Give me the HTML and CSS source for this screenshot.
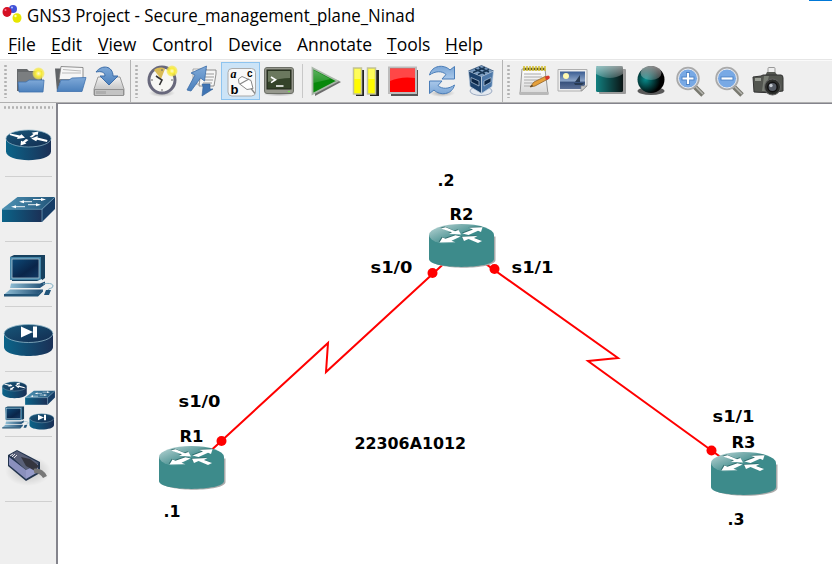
FILE: index.html
```html
<!DOCTYPE html>
<html lang="en">
<head>
<meta charset="utf-8">
<title>GNS3 Project</title>
<link rel="stylesheet" href="styles.css">
</head>
<body>
<svg class="defs" aria-hidden="true">
  <defs>
    <linearGradient id="blue" x1="0" y1="0" x2="0" y2="1"><stop offset="0" stop-color="#7fa9d8"/><stop offset="1" stop-color="#4b80bc"/></linearGradient>
    <linearGradient id="pale" x1="0" y1="0" x2="0" y2="1"><stop offset="0" stop-color="#7ba6d6"/><stop offset="1" stop-color="#a9c8ea"/></linearGradient>
    <linearGradient id="navy" x1="0" y1="0" x2="1" y2="0"><stop offset="0" stop-color="#0b6489"/><stop offset="1" stop-color="#1b3056"/></linearGradient>
    <linearGradient id="face" x1="0" y1="0" x2="1" y2="1"><stop offset="0" stop-color="#17577a"/><stop offset="1" stop-color="#132c50"/></linearGradient>
    <linearGradient id="screen" x1="0" y1="0" x2="1" y2="1"><stop offset="0" stop-color="#0d4a78"/><stop offset=".6" stop-color="#0a2549"/><stop offset="1" stop-color="#123a64"/></linearGradient>
    <linearGradient id="steel" x1="0" y1="0" x2="1" y2="0"><stop offset="0" stop-color="#4e93b5"/><stop offset="1" stop-color="#215378"/></linearGradient>
    <linearGradient id="light" x1="0" y1="0" x2="1" y2="0"><stop offset="0" stop-color="#8fbdd4"/><stop offset="1" stop-color="#1c4a70"/></linearGradient>
    <linearGradient id="teal" x1="0" y1="0" x2="1" y2="0"><stop offset="0" stop-color="#128080"/><stop offset="1" stop-color="#0a1414"/></linearGradient>
    <linearGradient id="gloss" x1="0" y1="0" x2="0" y2="1"><stop offset="0" stop-color="#fff" stop-opacity=".55"/><stop offset="1" stop-color="#fff" stop-opacity=".2"/></linearGradient>
    <linearGradient id="paper" x1="0" y1="0" x2="0" y2="1"><stop offset="0" stop-color="#fff"/><stop offset="1" stop-color="#d8d8d8"/></linearGradient>
    <linearGradient id="metal" x1="0" y1="0" x2="0" y2="1"><stop offset="0" stop-color="#f1f1f1"/><stop offset="1" stop-color="#b4b4b4"/></linearGradient>
    <linearGradient id="sky" x1="0" y1="0" x2="0" y2="1"><stop offset="0" stop-color="#3a5c92"/><stop offset=".55" stop-color="#8ea6c8"/><stop offset=".6" stop-color="#38517c"/><stop offset="1" stop-color="#5d7196"/></linearGradient>
    <radialGradient id="sun"><stop offset="0" stop-color="#fffbd0"/><stop offset=".45" stop-color="#f9ec38"/><stop offset=".8" stop-color="#f5e84d" stop-opacity=".75"/><stop offset="1" stop-color="#f5e84d" stop-opacity="0"/></radialGradient>
    <radialGradient id="orb" cx=".3" cy=".5" r=".7"><stop offset="0" stop-color="#078a8a"/><stop offset=".45" stop-color="#033c3c"/><stop offset=".8" stop-color="#000"/></radialGradient>
    <radialGradient id="soft"><stop offset="0" stop-color="#000" stop-opacity=".3"/><stop offset="1" stop-color="#000" stop-opacity="0"/></radialGradient>
    <linearGradient id="shine" x1="0" y1=".1" x2=".6" y2=".6"><stop offset="0" stop-color="#b8d5d5"/><stop offset=".45" stop-color="#7db0b0"/><stop offset=".95" stop-color="#3d8b8b"/></linearGradient>
    <symbol id="router" viewBox="0 0 56 64" overflow="visible">
      <path d="M6 26.500v13c0 11.500 45 11.500 45 0v-13z" fill="url(#navy)"/>
      <ellipse cx="28.500" cy="26.500" rx="22.500" ry="8.500" fill="url(#face)" stroke="#8fb6c8" stroke-width=".7"/>
      <path d="M10 21.500l10 2 1.500-1.200 3.500 3.500-8 1.200.8-1.600-8-2.400zM29.500 25l4-3-2-1.200 7-1.300-1 3.800-1.500-.7-4 3zM47 30l-10-2.300-.8 1.500-5-2.700 6.500-2.500-.2 1.500 10 2.500zM28.500 28l-3.500 2.800 1.500.8-6 2 .5-4.800 1.800.8 3.200-2.600z" fill="#fff"/>
    </symbol>
    <symbol id="switch" viewBox="0 0 56 64" overflow="visible">
      <path d="M2 32L17.500 20H55L42 32z" fill="url(#steel)"/>
      <path d="M2 32h40v13H2z" fill="url(#navy)"/>
      <path d="M42 32l13-12v12L42 45z" fill="#173d66"/>
      <path d="M2 32.300h40L55 20M42 32v13" fill="none" stroke="#75a9c4" stroke-width=".7"/>
      <path d="M33 22.500h9M23 24.700h9M28 27.700h9M15 29.700h10" stroke="#fff" stroke-width=".9"/>
      <path d="M41 21l5 1.500-5 1.500zM24 23.200l-5 1.500 5 1.500zM36 26.200l5 1.500-5 1.500zM16 28.200l-5 1.500 5 1.500z" fill="#fff"/>
    </symbol>
    <symbol id="pc" viewBox="0 0 56 64" overflow="visible">
      <path d="M10 15l4-2h31v23l-4 3H12z" fill="#17415f"/>
      <path d="M10 15h31v23H10z" fill="#4383a6"/>
      <rect x="12" y="17" width="27" height="19" fill="url(#screen)" stroke="#bad0db" stroke-width=".7"/>
      <path d="M13 39h24l5-2v3H13z" fill="#eaf2f5"/>
      <path d="M11 41.500h29l5-2v3l-5 3.500H10z" fill="url(#light)"/>
      <path d="M10 47.500h33l-5 5H4z" fill="url(#light)"/><path d="M4 52h34l5-4.500v2l-5 5H4z" fill="#225477"/>
      <path d="M43 42c4-1 10-1 10 2s-5 2-5 4" fill="none" stroke="#82afc4"/><path d="M46 48h5l-2 5h-5z" fill="#22557a"/>
    </symbol>
    <symbol id="ring" viewBox="0 0 56 64" overflow="visible">
      <path d="M4 26v14c0 12 49 12 49 0V26z" fill="url(#navy)"/>
      <ellipse cx="28.500" cy="26.500" rx="24.300" ry="9" fill="url(#face)" stroke="#8fb6c8" stroke-width=".8"/>
      <path d="M21 19.500l12 5.500-12 5.500zM33 19.500h4v11h-4z" fill="#fff"/>
    </symbol>
    <symbol id="node" viewBox="0 0 68 46" overflow="visible">
      <path d="M2 12.500v23.500c3 10.500 64.500 10 64.500 0V12.500z" fill="#aaa"/>
      <path d="M0 11v24c0 10.500 65 10.500 65 0V11z" fill="#3d8b8b"/>
      <ellipse cx="32.500" cy="11" rx="32.500" ry="11" fill="url(#shine)"/>
      <path id="arrows-shade" d="M12 4.500l4.500-1.200 9.500 4 3.500-1.300 2.500 4.500-12-.7 3-1.500zM53.500 3.300l-1.500 4.700-3-1.200-9.500 4.200-6-1.500 10.500-4-4-1.700zM33 12.700l15.500-.7-3.500 2 8 3-4 2-9.500-4-4.500 2zM26.500 11.200l5 1.300-9 4.300 4 1.500-16 .2 3-5 3 1.200z" fill="#245f5f" opacity=".75" transform="translate(-.8 -.8)"/>
      <path d="M12 4.500l4.500-1.200 9.500 4 3.500-1.300 2.500 4.500-12-.7 3-1.500zM53.500 3.300l-1.500 4.700-3-1.200-9.500 4.200-6-1.500 10.500-4-4-1.700zM33 12.700l15.500-.7-3.500 2 8 3-4 2-9.500-4-4.500 2zM26.500 11.200l5 1.300-9 4.300 4 1.500-16 .2 3-5 3 1.200z" fill="#fff"/>
    </symbol>
  </defs>
</svg>

<div class="window">
  <header class="titlebar">
    <svg class="logo" viewBox="0 0 24 24"><circle cx="13" cy="9" r="4" fill="#4052d8"/><ellipse cx="7" cy="12" rx="4.500" ry="5" fill="#d51124"/><ellipse cx="17" cy="18" rx="4.500" ry="4.800" fill="#e7e600"/><circle cx="5.500" cy="10" r="1" fill="#f79"/><circle cx="12" cy="7.500" r="1" fill="#b9c2ff"/><circle cx="15.500" cy="16" r="1.200" fill="#ffffb0"/></svg>
    <svg class="title" viewBox="0 0 560 30"><text x="0" y="22" textLength="388" lengthAdjust="spacingAndGlyphs">GNS3 Project - Secure_management_plane_Ninad</text></svg>
    <span class="accent"></span>
  </header>

  <nav class="menu">
    <span class="item file"><u>F</u>ile</span><span class="item edit"><u>E</u>dit</span><span class="item view"><u>V</u>iew</span><span class="item control">Control</span><span class="item device">Device</span><span class="item annotate">Annotate</span><span class="item tools"><u>T</u>ools</span><span class="item help"><u>H</u>elp</span>
  </nav>

  <div class="toolbars">
    <div class="bar files">
      <i class="grip"></i>
      <svg class="ico" viewBox="0 0 39 38"><path d="M5 7h10l2 2h13v20H5z" fill="#66696b"/><path d="M6 10h23v10H6z" fill="#7b7e80"/><path d="M6 20h8l3-2h15l-1 12H7z" fill="url(#blue)" stroke="#3f71ad" stroke-width=".8"/><circle cx="26.500" cy="11.500" r="6.500" fill="url(#sun)"/></svg>
      <svg class="ico" viewBox="0 0 39 38"><path d="M4 6.500h8l2 3h17v8H10L6 30z" fill="#606366"/><path d="M10 4.500l22 1v12H8z" fill="#f6f6f6" stroke="#777" stroke-width=".8"/><path d="M12 7.500l18 1.500M11 11h19" stroke="#bbb"/><path d="M10 18h8l3-2 14-.5-4 14H6z" fill="url(#blue)" stroke="#3f71ad" stroke-width=".8"/></svg>
      <svg class="ico" viewBox="0 0 39 38"><path d="M8 15h22l4 12v6H4v-6z" fill="url(#metal)" stroke="#888" stroke-width=".8"/><path d="M4.500 27.500h29v6h-29z" fill="#c3c3c3" stroke="#858585" stroke-width=".8"/><path d="M7 29v3M9 29v3M11 29v3M13 29v3M15 29v3" stroke="#888" stroke-width=".7"/><path d="M6 10C12 2 23 4 23 14h5l-9 9-9-9h5c0-4-4-5-9-4z" fill="url(#blue)" stroke="#3c6da8"/></svg>
    </div>
    <div class="bar control">
      <i class="grip"></i>
      <svg class="ico" viewBox="0 0 39 38"><ellipse cx="19" cy="31" rx="13" ry="4" fill="url(#soft)"/><circle cx="19" cy="18" r="13" fill="#f7f7f4" stroke="#68687c" stroke-width="3"/><path d="M18 17L11 8c4-3 8-3 11-1z" fill="#d9bb55"/><path d="M13 14l6 4-2.500 5" fill="none" stroke="#333" stroke-width="1.600"/><path d="M19 7v2M8 18h2M28 18h2M19 27v2" stroke="#666"/><circle cx="29" cy="9" r="6" fill="url(#sun)"/></svg>
      <svg class="ico" viewBox="0 0 39 38"><path d="M11 7h13l3 4v11H11z" fill="#f3f3f3" stroke="#999" stroke-width=".8"/><path d="M19 8h15v4l-2 12H17z" fill="#f6f6f6" stroke="#777" stroke-width=".8"/><path d="M24 12h8M23 15h9M22 18h9M21 21h9" stroke="#999"/><path d="M20 22h8v5h3l-11 7 1-9z" fill="#3f74b4" stroke="#2f5f98" stroke-width=".6"/><path d="M24.500 4l-2 15-4-3L9 29l-4-1 8-15-4-2z" fill="url(#blue)" stroke="#3b6ca7" stroke-width=".8"/></svg>
      <svg class="ico active" viewBox="0 0 39 38"><rect x="7" y="6.500" width="27.500" height="27.500" rx="4" fill="#f8f8f8" stroke="#aaa"/><text x="9.500" y="15.500" class="glyph serif">a</text><text x="26" y="15" class="glyph">c</text><text x="9.500" y="31.500" class="glyph large">b</text><path d="M17.500 17l3.500-2.500 9 4 2 8-6 1-8-6z" fill="#fff" stroke="#888"/><path d="M19 22l9-5M30 26.500l4 5" stroke="#888" stroke-width="1.300"/></svg>
      <svg class="ico" viewBox="0 0 39 38"><ellipse cx="19" cy="32" rx="16" ry="2.500" fill="url(#soft)"/><rect x="4.500" y="5.500" width="29" height="26" rx="2.500" fill="#96988d" stroke="#6c6f67"/><rect x="7" y="8" width="24" height="19" fill="#344329" stroke="#20271b"/><path d="M8 9h22v7q-10 0-22 4z" fill="#6b785e"/><path d="M11 15l4.500 2.800-4.500 2.800" fill="none" stroke="#fff" stroke-width="1.600"/><path d="M16 24h7.500" stroke="#fff" stroke-width="1.500"/><circle cx="29" cy="29.500" r=".8" fill="#6f3"/></svg>
      <i class="sep"></i>
      <svg class="ico" viewBox="0 0 39 38"><path d="M9 8l26 12L9 34z" fill="#555" opacity=".85"/><path d="M6.500 6l25 13-25 13z" fill="#07880b" stroke="#a9b7a9" stroke-width="1.800"/><path d="M7.500 8l17 9-17 4z" fill="url(#gloss)" opacity=".6"/></svg>
      <svg class="ico" viewBox="0 0 39 38"><path d="M11 8h8v26h-8zM25 8h9v26h-9z" fill="#222"/><path d="M8.500 6h8v26h-8zM22.500 6h8v26h-8z" fill="#fffb00" stroke="#c2c29a" stroke-width="1.500"/><path d="M9.500 7h6v10h-6zM23.500 7h6v10h-6z" fill="#fff" opacity=".35"/></svg>
      <svg class="ico" viewBox="0 0 39 38"><path d="M7 8h27v26H7z" fill="#555"/><path d="M5 5.500h27V31H5z" fill="#f00" stroke="#bcbcbc" stroke-width="2"/><path d="M6 7h25v9q-14-2-25 3z" fill="#fff" opacity=".28"/></svg>
      <svg class="ico" viewBox="0 0 39 38"><ellipse cx="19" cy="31" rx="13" ry="4" fill="url(#soft)"/><path id="sync" d="M6.500 13C9 3 21 2 27 8l4.500-3.500V17H19l4-4.500C19 8.500 12 9 6.500 13z" fill="url(#pale)" stroke="#4a7db8" stroke-width="1"/><use href="#sync" transform="rotate(180 19 18)"/></svg>
      <svg class="ico" viewBox="0 0 39 38"><ellipse cx="19" cy="29" rx="11" ry="4.500" fill="#e4e9f0" stroke="#9cabc2"/><path d="M6.500 9l13-5.500L31.500 9l-12 5.500z" fill="#7d9fc3" stroke="#24456d" stroke-width=".7"/><path d="M6.500 9l13 5.500v17L8 24.500z" fill="#1b416c" stroke="#c6d5e6" stroke-width=".7"/><path d="M31.500 9l-12 5.500v17L30 24.500z" fill="#4d78a8" stroke="#c6d5e6" stroke-width=".7"/><path d="M13 7l10 5M17 5.500l10 4.500M11 10.500l12-5M16 12.500l11-5" stroke="#173554" stroke-width="1.400"/><path d="M9 15.500l8 3.500v5l-8-4zM29 15.500L22 19v5l7-4z" fill="#0b2646" stroke="#b9cde2" stroke-width=".7"/></svg>
    </div>
    <div class="bar annotate">
      <i class="grip"></i>
      <svg class="ico" viewBox="0 0 39 38"><path d="M7 7h23l3 25H5z" fill="url(#paper)" stroke="#999"/><path d="M4.500 30h29v3h-29z" fill="#b9b9b9"/><path d="M9 12h17M9 15h18M9 18h15M9 21h11M9 24h9" stroke="#aaa"/><path d="M8 7h22" stroke="#665f29" stroke-width="2.500"/><path d="M9 4v5M12 4v5M15 4v5M18 4v5M21 4v5M24 4v5M27 4v5M30 4v5" stroke="#d8c437" stroke-width="1.600"/><path d="M15 25l4-5 12-6 2 3-13 7z" fill="#e6a13b" stroke="#936226" stroke-width=".8"/><path d="M15 25l2-2 1 1z" fill="#222"/><path d="M30 15l3-1.500q3 1 1 3.500l-3 1z" fill="#d9372d"/></svg>
      <svg class="ico" viewBox="0 0 39 38"><path d="M4 7.500h29V24l-5 5H4z" fill="#eee" stroke="#b0b0b0"/><path d="M6 9.500h25V23l-4 4H6z" fill="url(#sky)"/><circle cx="12" cy="14" r="3" fill="#fff9b0"/><path d="M21 20l5-7v7zM20 21h10l-2 2h-7z" fill="#293b53"/><path d="M27 29v-5h6z" fill="#ccc" stroke="#888" stroke-width=".6"/></svg>
      <svg class="ico" viewBox="0 0 39 38"><rect x="6" y="7" width="27" height="25" rx="1" fill="#777" opacity=".7"/><rect x="3" y="4" width="27" height="26" rx="1.500" fill="url(#teal)"/><path d="M3 5q1-1 2-1h24q1 0 1 1v7q-13 8-27 0z" fill="url(#gloss)"/></svg>
      <svg class="ico" viewBox="0 0 39 38"><ellipse cx="19" cy="29" rx="13.500" ry="4" fill="#333" opacity=".8"/><circle cx="19" cy="17.500" r="13.500" fill="url(#orb)"/><ellipse cx="19" cy="11" rx="10.500" ry="7" fill="url(#gloss)"/></svg>
      <svg class="ico" viewBox="0 0 39 38"><path d="M23 24l9 9" stroke="#797970" stroke-width="5"/><path d="M25 25l7 7" stroke="#b8b8b2" stroke-width="1.500"/><circle cx="17" cy="16.500" r="10.500" fill="#78a9e5" stroke="#aaa" stroke-width="2.500"/><circle cx="17" cy="16.500" r="9.500" fill="none" stroke="#e8eef8"/><path d="M17 10v13M10.500 16.500h13" stroke="#4e83c5" stroke-width="4"/><path d="M17 11v11M11.500 16.500h11" stroke="#fff" stroke-width="2.200"/></svg>
      <svg class="ico" viewBox="0 0 39 38"><path d="M23 24l9 9" stroke="#797970" stroke-width="5"/><path d="M25 25l7 7" stroke="#b8b8b2" stroke-width="1.500"/><circle cx="17" cy="16.500" r="10.500" fill="#78a9e5" stroke="#aaa" stroke-width="2.500"/><circle cx="17" cy="16.500" r="9.500" fill="none" stroke="#e8eef8"/><path d="M10.500 16.500h13" stroke="#4e83c5" stroke-width="4"/><path d="M11.500 16.500h11" stroke="#fff" stroke-width="2.200"/></svg>
      <svg class="ico" viewBox="0 0 39 38"><rect x="19" y="5.500" width="7" height="6" rx="1" fill="#eee" stroke="#999"/><path d="M16 14l2-4h8l3 4z" fill="#555852"/><path d="M4 15l8-1 2-1h18q2 0 2 3v13q-14 3-29 1z" fill="#535650" stroke="#333"/><path d="M6 16h6v3H6z" fill="#9a9e95"/><path d="M15 14h5l-4 15h-3z" fill="#797e75"/><circle cx="23.500" cy="25" r="8" fill="#2b2d2a" stroke="#666"/><circle cx="23.500" cy="25" r="4.700" fill="#555b64" stroke="#111" stroke-width="1.500"/><circle cx="22" cy="23.500" r="1.700" fill="#c5cad0"/></svg>
    </div>
  </div>

  <main class="workspace">
    <aside class="devices">
      <i class="grip-h"></i>
      <div class="cell"><svg viewBox="0 0 56 64"><use href="#router"/></svg></div>
      <div class="cell"><svg viewBox="0 0 56 64"><use href="#switch"/></svg></div>
      <div class="cell"><svg viewBox="0 0 56 64"><use href="#pc"/></svg></div>
      <div class="cell"><svg viewBox="0 0 56 64"><use href="#ring"/></svg></div>
      <div class="cell"><svg viewBox="0 0 56 64"><use href="#router" width="30.500" height="34.800" x="-1" y="0"/><use href="#switch" width="31.500" height="36" x="24" y="7.500"/><use href="#pc" width="30" height="34" x="0" y="27.500"/><use href="#ring" width="28" height="32" x="27.500" y="33"/></svg></div>
      <div class="cell"><svg viewBox="0 0 56 64"><ellipse cx="28" cy="34" rx="23" ry="15" fill="url(#soft)" opacity=".7"/><path d="M8 18l9-5 23 12v11l-14 8L8 29z" fill="#22344e"/><path d="M9 20l17 13v9L9 28z" fill="#8a90bd"/><path d="M10 18l7-4 22 12-13 7z" fill="#596078"/><path d="M26 33l12-6v8l-12 7z" fill="#969bc9"/><path d="M21 20l9 2 9 7-4 5-9-5z" fill="#34353f"/><path d="M10 19l3-2M12 20l3-3M14 21l3-3" stroke="#e5e5ea"/><path d="M34 34q7-1 11 6" fill="none" stroke="#777" stroke-width="4.500"/></svg></div>
    </aside>

    <section class="scene">
      <svg viewBox="58 104 774 460">
        <g class="links">
          <path d="M193 467L328 343L326 372L463 246"/>
          <path d="M462 247L618 358L588 361L744 474"/>
        </g>
        <g class="ports"><circle cx="221.500" cy="441" r="5"/><circle cx="432.500" cy="273" r="5"/><circle cx="494.500" cy="269" r="5"/><circle cx="711.500" cy="450.500" r="5"/></g>
        <use href="#node" x="429" y="224" width="68" height="46"/>
        <use href="#node" x="159" y="446" width="68" height="46"/>
        <use href="#node" x="711" y="452" width="68" height="46"/>
        <g class="labels">
          <text x="437.500" y="186" textLength="17" lengthAdjust="spacingAndGlyphs">.2</text>
          <text x="449.500" y="220" textLength="24" lengthAdjust="spacingAndGlyphs">R2</text>
          <text x="370.500" y="273" textLength="42" lengthAdjust="spacingAndGlyphs">s1/0</text>
          <text x="511.500" y="273" textLength="42" lengthAdjust="spacingAndGlyphs">s1/1</text>
          <text x="178.500" y="407" textLength="42" lengthAdjust="spacingAndGlyphs">s1/0</text>
          <text x="179.500" y="442" textLength="24" lengthAdjust="spacingAndGlyphs">R1</text>
          <text x="163.500" y="517" textLength="17" lengthAdjust="spacingAndGlyphs">.1</text>
          <text x="354.500" y="449" textLength="111.500" lengthAdjust="spacingAndGlyphs">22306A1012</text>
          <text x="712.500" y="422" textLength="42" lengthAdjust="spacingAndGlyphs">s1/1</text>
          <text x="731.500" y="448" textLength="24" lengthAdjust="spacingAndGlyphs">R3</text>
          <text x="727.500" y="525" textLength="17" lengthAdjust="spacingAndGlyphs">.3</text>
        </g>
      </svg>
    </section>
  </main>
</div>
</body>
</html>
```
FILE: styles.css
```css
* { box-sizing: border-box; }
body { margin: 0; background: #fff; overflow: hidden; font-family: "Open Sans", "Noto Sans", sans-serif; color: #000; }
.defs { position: absolute; width: 0; height: 0; }
.window { width: 832px; height: 564px; display: flex; flex-direction: column; }
.titlebar { display: flex; height: 30px; flex: none; }
.logo { width: 24px; height: 24px; margin-right: 3px; }
.title { width: 560px; height: 30px; font-size: 17.5px; overflow: visible; }
.accent { margin-left: auto; width: 23px; height: 1px; background: #0078d7; }

.menu { display: flex; gap: 16px; height: 29px; flex: none; padding-left: 8px; font-size: 17.5px; line-height: 29px; white-space: nowrap; }
.menu u { text-decoration-thickness: 1px; text-underline-offset: 2px; }
.file { width: 27px; }
.edit { width: 31px; }
.view { width: 38px; }
.menu .control { width: 60px; }
.device { width: 53px; }
.menu .annotate { width: 74px; }
.tools { width: 42px; }
.help { width: 38px; }

.toolbars { display: flex; height: 43px; flex: none; background: #efefef; border-top: 1px solid #e6e6e6; }
.bar { display: flex; align-items: flex-start; padding: 2px 0 0 4px; box-shadow: inset 0 1px #fafafa; }
.bar.files, .bar.control { border-right: 1px solid #b4b4b4; }
.bar.files { width: 131px; }
.bar.control { width: 372px; }
.bar.annotate { flex: 1; }
.grip { width: 3px; height: 34px; margin: 2px 5px 0 0; background: radial-gradient(circle, #b2b2b2 1px, transparent 1.5px) 0 0 / 3px 4px; }
.ico { width: 39px; height: 38px; flex: none; }
.ico.active { background: #cce4f7; box-shadow: inset 0 0 0 1px #8ec4ef; }
.sep { width: 1px; height: 34px; margin: 2px 3px 0; background: #c8c8c8; }
.glyph { font: bold 10px "Liberation Sans", sans-serif; }
.glyph.serif { font: italic bold 12px "Liberation Serif", serif; }
.glyph.large { font-size: 13px; }

.workspace { display: flex; flex: 1; min-height: 0; background: #efefef; border-top: 1px solid #b0b0b0; }
.devices { width: 56px; display: flex; flex-direction: column; flex: none; }
.grip-h { width: 50px; height: 3px; margin: 3px 0 3px 3px; background: radial-gradient(circle, #b2b2b2 1px, transparent 1.5px) 0 0 / 4px 3px; }
.cell { height: 65px; flex: none; background: linear-gradient(#d0d0d0, #d0d0d0) 5px 64px / 47px 1px no-repeat; }
.cell svg { display: block; width: 56px; height: 64px; }
.scene { flex: 1; background: #fff; border-left: 2px solid #84848c; border-top: 1px solid #84848c; }
.scene svg { display: block; width: 774px; height: 460px; }
.links path { fill: none; stroke: #f00; stroke-width: 2; }
.ports circle { fill: #f00; }
.labels { font: bold 16px "DejaVu Sans", Verdana, sans-serif; }
```
